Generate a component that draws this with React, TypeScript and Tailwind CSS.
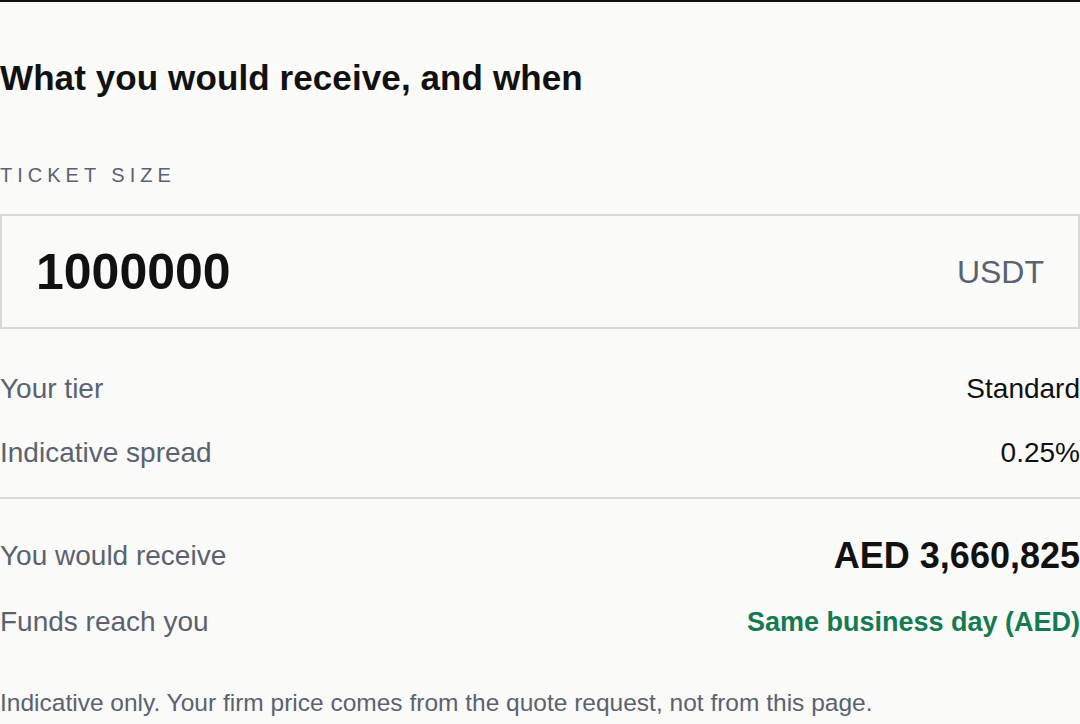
export default function App() {
  return (
    <div
      className="w-full min-h-screen bg-[#fafaf8] text-[#111111] overflow-hidden"
      style={{ fontFamily: '"Liberation Sans", Arial, sans-serif' }}
    >
      <div className="h-[2px] bg-[#111111]" />

      <section className="flex flex-col">
        {/* HEADING */}
        <h2 className="mt-[55px] text-[35px] leading-[42px] font-bold tracking-[0.1px]">
          What you would receive, and when
        </h2>

        {/* TICKET SIZE */}
        <p className="mt-[64px] text-[20px] leading-[24px] tracking-[0.25em] uppercase text-[#5a6270]">
          Ticket size
        </p>

        <div className="mt-[27px] h-[115px] border-2 border-[#d8d8d6] flex items-center justify-between pl-[34px] pr-[34px]">
          <span className="text-[50px] leading-none font-bold text-[#111111]">1000000</span>
          <span className="text-[32px] leading-none text-[#5a6270]">USDT</span>
        </div>

        {/* TIER + SPREAD */}
        <div className="mt-[42px] flex items-center justify-between h-[36px]">
          <span className="text-[28px] text-[#5a6270]">Your tier</span>
          <span className="text-[28px] text-[#111111]">Standard</span>
        </div>
        <div className="mt-[28px] flex items-center justify-between h-[36px]">
          <span className="text-[28px] text-[#5a6270]">Indicative spread</span>
          <span className="text-[28px] text-[#111111]">0.25%</span>
        </div>

        <div className="mt-[26px] h-[2px] bg-[#d8d8d6]" />

        {/* RESULT */}
        <div className="mt-[37px] flex items-center justify-between h-[40px]">
          <span className="text-[28px] text-[#5a6270]">You would receive</span>
          <span className="text-[36px] font-bold text-[#111111]">AED 3,660,825</span>
        </div>
        <div className="mt-[28px] flex items-center justify-between h-[36px]">
          <span className="text-[28px] text-[#5a6270]">Funds reach you</span>
          <span className="text-[27px] font-semibold text-[#157a52]">Same business day (AED)</span>
        </div>

        <p className="mt-[48px] text-[24.5px] leading-[30px] text-[#5a6270]">
          Indicative only. Your firm price comes from the quote request, not from this page.
        </p>
      </section>
    </div>
  );
}
